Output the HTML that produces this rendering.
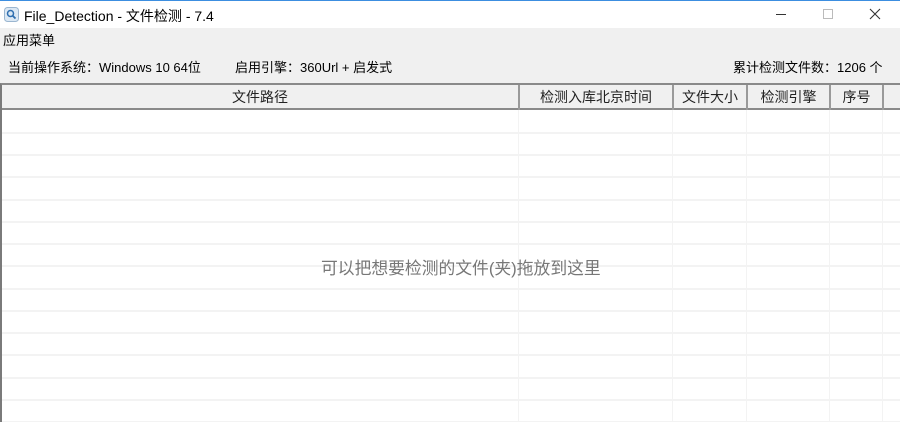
<!DOCTYPE html>
<html><head><meta charset="utf-8"><style>
*{margin:0;padding:0;box-sizing:border-box}
body{width:900px;height:422px;overflow:hidden;background:#f0f0f0;font-family:"Liberation Sans","Microsoft YaHei","Noto Sans CJK SC",sans-serif;font-size:13px;color:#000;position:relative}
.title{position:absolute;left:0;top:0;width:900px;height:28px;background:#fff;border-top:1px solid #3c8ee0}
.title .t{position:absolute;left:24px;top:5px;font-size:14px}
.abs{position:absolute;white-space:nowrap}
.grid{position:absolute;left:0;top:83px;width:900px;height:339px;background:#fff;border-left:2px solid #7a7a7a;border-top:2px solid #8a8a8a;overflow:hidden}
.hbar{position:absolute;left:0;top:0;width:900px;height:25px;background:#f0f0f0;border-bottom:2px solid #8a8a8a}
.hdr{position:absolute;top:0;height:25px;text-align:center;line-height:25px;font-size:14px;color:#222}
.sep{position:absolute;top:0;width:2px;height:25px;background:#9a9a9a}
.row{position:absolute;left:0;width:900px;height:2px;background:#f3f3f3}
.col{position:absolute;top:25px;width:1px;height:320px;background:#f3f3f3}
</style></head><body>
<div class="title">
<svg style="position:absolute;left:4px;top:6px" width="15" height="15" viewBox="0 0 15 15"><rect x="0.5" y="0.5" width="14" height="14" rx="3" fill="#dbe8f4" stroke="#9bb6d0"/><circle cx="6.5" cy="6.5" r="3" fill="none" stroke="#2f6fb0" stroke-width="1.5"/><path d="M8.7 8.7L11.5 11.5" stroke="#2f6fb0" stroke-width="1.8"/></svg>
<span class="t">File_Detection - 文件检测 - 7.4</span>
<div class="abs" style="left:776px;top:13px;width:10px;height:1px;background:#333"></div>
<div class="abs" style="left:823px;top:8px;width:10px;height:10px;border:1px solid #bbb"></div>
<svg class="abs" style="left:869px;top:7px" width="12" height="12"><path d="M1 1L11 11M11 1L1 11" stroke="#333" stroke-width="1.1"/></svg>
</div>
<div class="abs" style="left:3px;top:30px">应用菜单</div>
<div class="abs" style="left:8px;top:57px">当前操作系统：Windows 10 64位</div>
<div class="abs" style="left:235px;top:57px">启用引擎：360Url + 启发式</div>
<div class="abs" style="left:733px;top:57px">累计检测文件数：1206 个</div>
<div class="grid">
<div class="hbar"></div>
<div class="hdr" style="left:0;width:516px">文件路径</div>
<div class="hdr" style="left:518px;width:152px">检测入库北京时间</div>
<div class="hdr" style="left:672px;width:72px">文件大小</div>
<div class="hdr" style="left:746px;width:81px">检测引擎</div>
<div class="hdr" style="left:829px;width:51px">序号</div>
<div class="sep" style="left:516px"></div><div class="sep" style="left:670px"></div><div class="sep" style="left:744px"></div><div class="sep" style="left:827px"></div><div class="sep" style="left:880px"></div>
<div class="col" style="left:516px"></div><div class="col" style="left:670px"></div><div class="col" style="left:744px"></div><div class="col" style="left:827px"></div><div class="col" style="left:880px"></div>
<div class="row" style="top:47px"></div><div class="row" style="top:69px"></div><div class="row" style="top:91px"></div><div class="row" style="top:114px"></div><div class="row" style="top:136px"></div><div class="row" style="top:158px"></div><div class="row" style="top:180px"></div><div class="row" style="top:203px"></div><div class="row" style="top:225px"></div><div class="row" style="top:247px"></div><div class="row" style="top:269px"></div><div class="row" style="top:292px"></div><div class="row" style="top:314px"></div><div class="row" style="top:336px"></div>
<div class="abs" style="left:319px;top:170px;font-size:16.8px;color:#777">可以把想要检测的文件(夹)拖放到这里</div>
</div>
</body></html>
